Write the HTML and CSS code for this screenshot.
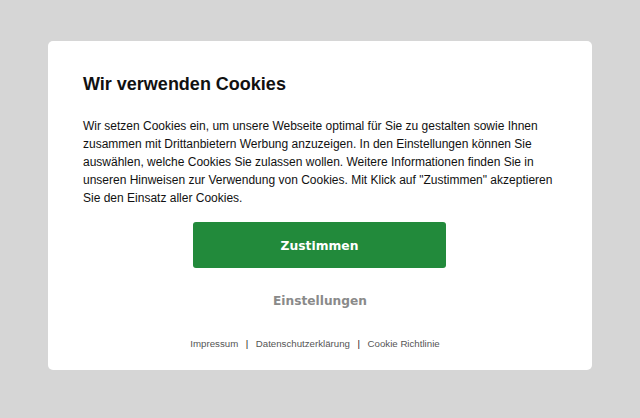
FILE: index.html
```html
<!DOCTYPE html>
<html lang="de">
<head>
<meta charset="utf-8">
<link rel="stylesheet" href="styles.css">
</head>
<body>
<div class="page">
  <div class="card">
    <h1 class="title">Wir verwenden Cookies</h1>
    <p class="text">Wir setzen Cookies ein, um unsere Webseite optimal für Sie zu gestalten sowie Ihnen zusammen mit Drittanbietern Werbung anzuzeigen. In den Einstellungen können Sie auswählen, welche Cookies Sie zulassen wollen. Weitere Informationen finden Sie in unseren Hinweisen zur Verwendung von Cookies. Mit Klick auf "Zustimmen" akzeptieren Sie den Einsatz aller Cookies.</p>
    <div class="actions">
      <button class="accept">Zustimmen</button>
      <button class="settings">Einstellungen</button>
    </div>
    <div class="links">
      <a class="link">Impressum</a><span class="sep">|</span><a class="link">Datenschutzerklärung</a><span class="sep">|</span><a class="link">Cookie Richtlinie</a>
    </div>
  </div>
</div>
</body>
</html>
```
FILE: styles.css
```css
* { box-sizing: border-box; }
html, body { margin: 0; padding: 0; }
body {
  background: #d6d6d6;
  font-family: "Liberation Sans", Arial, sans-serif;
  width: 640px;
  height: 418px;
}
.page {
  padding: 41px 48px 0 48px;
}
.card {
  background: #fff;
  border-radius: 5px;
  height: 329px;
  padding: 31px 35px 0 35px;
}
.title {
  margin: 0;
  font-size: 18px;
  font-weight: bold;
  color: #111;
  line-height: 24px;
}
.text {
  margin: 21px 0 0 0;
  font-size: 12px;
  line-height: 18px;
  color: #111;
}
.actions {
  display: flex;
  flex-direction: column;
  align-items: center;
  margin-top: 15px;
}
.accept {
  width: 253px;
  height: 46px;
  border: none;
  border-radius: 3px;
  background: #228a3b;
  color: #fff;
  font-family: "DejaVu Sans", Verdana, sans-serif;
  font-weight: bold;
  font-size: 12.3px;
  padding: 2px 0 0 0;
  cursor: pointer;
  margin-left: -1px;
}
.settings {
  margin-top: 23px;
  border: none;
  background: none;
  padding: 0;
  color: #8a8a8a;
  font-family: "DejaVu Sans", Verdana, sans-serif;
  font-weight: bold;
  font-size: 12.2px;
  line-height: 20px;
}
.links {
  display: flex;
  justify-content: center;
  margin-top: 26px;
  padding-right: 10px;
  font-size: 9.7px;
  line-height: 14px;
  color: #555;
}
.link { color: #555; }
.sep { color: #2a2222; margin: 0 7.5px; }
```
